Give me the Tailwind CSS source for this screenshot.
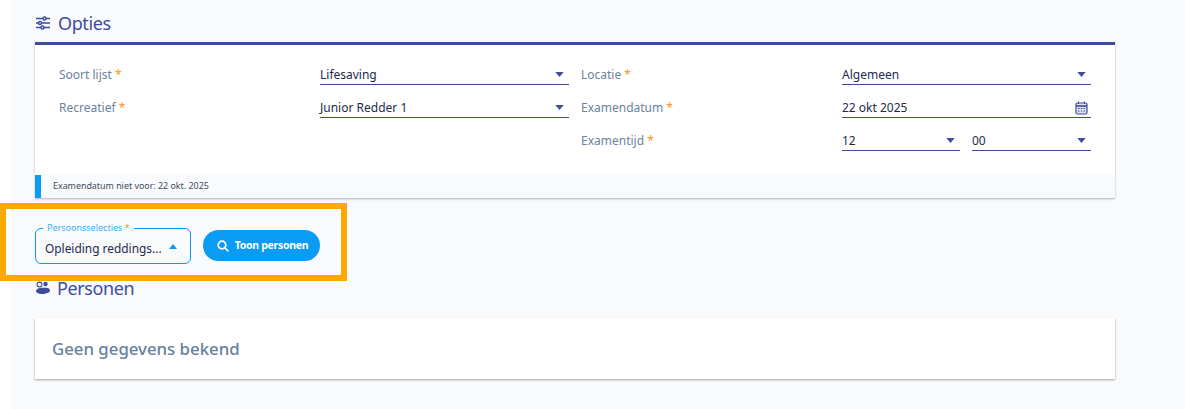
<!DOCTYPE html>
<html><head><meta charset="utf-8"><script src="https://cdn.jsdelivr.net/npm/@tailwindcss/browser@4"></script></head>
<body class="bg-white">
<div class="relative w-[1185px] h-[409px] overflow-hidden bg-white font-['Noto_Sans',sans-serif]">
  <main class="ml-[11px] h-full bg-[#f9fafc] pl-[24px] w-[1174px]">
    <div class="w-[1080px]">
      <h2 class="h-[42px] pt-[4px] flex items-center gap-[8px] text-[18px] leading-[24px] tracking-[-0.4px] text-[#3f4b9b]">
        <svg class="w-[14px] h-[14px] ml-[1px]" viewBox="0 0 14 14" fill="none" stroke="#3f4b9b" stroke-width="1.5"><path d="M0 2.500h7M10 2.500h4M0 7h2M6 7h8M0 11.500h5M8 11.500h6"/><circle cx="8.500" cy="2.500" r="1.500"/><circle cx="4" cy="7" r="1.500"/><circle cx="6.500" cy="11.500" r="1.500"/></svg>
        Opties
      </h2>
      <section class="h-[156px] bg-white border-t-[3px] border-[#3f4b9b] shadow-[0_1px_2px_rgba(0,0,0,0.3)] flex flex-col">
        <div class="flex-1 grid grid-cols-[261px_249px_273px_249px] pl-[24px] pt-[17px] text-[12px] grid-rows-[33px_33px_33px] content-start">
          <div class="pt-[1px] text-[#6b82a0] leading-[24px]">Soort lijst <span class="text-[#f7941d]">*</span></div>
          <div class="flex items-center justify-between h-[23px] pt-[3px] border-b border-[#3f4b9b] text-[#1e2a4a]">Lifesaving <svg class="w-[9px] h-[5px] mr-[5px]" viewBox="0 0 10 6"><path d="M0 0h10L5 6z" fill="#3f4b9b"/></svg></div>
          <div class="pt-[1px] pl-[12px] text-[#6b82a0] leading-[24px]">Locatie <span class="text-[#f7941d]">*</span></div>
          <div class="flex items-center justify-between h-[23px] pt-[3px] border-b border-[#3f4b9b] text-[#1e2a4a]">Algemeen <svg class="w-[9px] h-[5px] mr-[5px]" viewBox="0 0 10 6"><path d="M0 0h10L5 6z" fill="#3f4b9b"/></svg></div>

          <div class="pt-[1px] text-[#6b82a0] leading-[24px]">Recreatief <span class="text-[#f7941d]">*</span></div>
          <div class="flex items-center justify-between h-[23px] pt-[3px] border-b border-[#3f4b9b] text-[#1e2a4a]">Junior Redder 1 <svg class="w-[9px] h-[5px] mr-[5px]" viewBox="0 0 10 6"><path d="M0 0h10L5 6z" fill="#3f4b9b"/></svg></div>
          <div class="pt-[1px] pl-[12px] text-[#6b82a0] leading-[24px]">Examendatum <span class="text-[#f7941d]">*</span></div>
          <div class="flex items-center justify-between h-[23px] pt-[3px] border-b border-[#3f4b9b] text-[#1e2a4a]">22 okt 2025
            <svg class="w-[13px] h-[14px] mr-[3px]" viewBox="0 0 13 14" fill="none"><rect x="1" y="2" width="11" height="11" rx="1.500" fill="#dfe2f0" stroke="#3f4b9b" stroke-width="1.200"/><path d="M1 5h11" stroke="#3f4b9b" stroke-width="1.600"/><path d="M3.500 0.500v2.500M9.500 0.500v2.500" stroke="#3f4b9b"/><path d="M3 7.500h1.500M5.800 7.500h1.500M8.600 7.500h1.500M3 10h1.500M5.800 10h1.500M8.600 10h1.500" stroke="#3f4b9b"/></svg>
          </div>

          <div></div><div></div>
          <div class="pt-[1px] pl-[12px] text-[#6b82a0] leading-[24px]">Examentijd <span class="text-[#f7941d]">*</span></div>
          <div class="flex gap-[12px]">
            <div class="w-[118px] flex items-center justify-between h-[23px] pt-[3px] border-b border-[#3f4b9b] text-[#1e2a4a]">12 <svg class="w-[9px] h-[5px] mr-[5px]" viewBox="0 0 10 6"><path d="M0 0h10L5 6z" fill="#3f4b9b"/></svg></div>
            <div class="w-[119px] flex items-center justify-between h-[23px] pt-[3px] border-b border-[#3f4b9b] text-[#1e2a4a]">00 <svg class="w-[9px] h-[5px] mr-[5px]" viewBox="0 0 10 6"><path d="M0 0h10L5 6z" fill="#3f4b9b"/></svg></div>
          </div>
        </div>
        <div class="h-[23px] shrink-0 bg-[#f9fafc] border-l-[6px] border-[#0a9bf5] pl-[12px] text-[8.900px] leading-[22px] text-[#3d4a63]">Examendatum niet voor: 22 okt. 2025</div>
      </section>

      <div class="mt-[30px] flex items-start gap-[12px]">
        <div class="relative w-[156px] h-[36px] border border-[#0a9bf5] rounded-[6px] flex items-center justify-between pl-[9px] pr-[13px] pt-[5px] text-[11.900px] text-[#1e2a4a]">
          Opleiding reddings...
          <svg class="w-[8px] h-[5px] mb-[5px]" viewBox="0 0 10 6"><path d="M0 6h10L5 0z" fill="#0a9bf5"/></svg>
          <span class="absolute left-[7px] top-[-7px] px-[4px] bg-[#f9fafc] text-[9px] leading-[12px] text-[#3fb0f7]">Persoonsselecties <span class="text-[#f7941d]">*</span></span>
        </div>
        <button class="w-[117px] h-[31px] mt-[2px] pl-[2px] rounded-full bg-[#0a9bf5] text-white text-[10.500px] font-bold flex items-center justify-center gap-[6px] tracking-[-0.3px]">
          <svg class="w-[12px] h-[12px]" viewBox="0 0 12 12" fill="none" stroke="#fff" stroke-width="1.700"><circle cx="5" cy="5" r="3.800"/><path d="M8 8l3.400 3.400"/></svg>
          Toon personen
        </button>
      </div>

      <h2 class="mt-[10px] h-[28px] flex items-center gap-[6px] text-[18px] tracking-[-0.4px] text-[#3f4b9b]">
        <svg class="w-[16px] h-[14px]" viewBox="0 0 16 14" fill="#3f4b9b"><circle cx="4.500" cy="3.500" r="2.400" fill="none" stroke="#3f4b9b" stroke-width="1.100"/><circle cx="10.500" cy="3" r="2.200"/><path d="M1 10.500C1 8 4 6.800 7 6.800h4c2.500 0 4 1.200 4 3 0 1.600-2 2.400-4 2.400-1 1.200-8 1.600-10-1.700z"/></svg>
        Personen
      </h2>
      <section class="mt-[16px] h-[61px] bg-white shadow-[0_1px_2px_rgba(0,0,0,0.35)] pl-[17px] flex items-center text-[16.800px] font-medium text-[#66809e]">Geen gegevens bekend</section>
    </div>
  </main>
  <div class="absolute left-0 top-[203px] w-[347px] h-[78px] border-[6px] border-[#ffa800]"></div>
</div>
</body></html>
